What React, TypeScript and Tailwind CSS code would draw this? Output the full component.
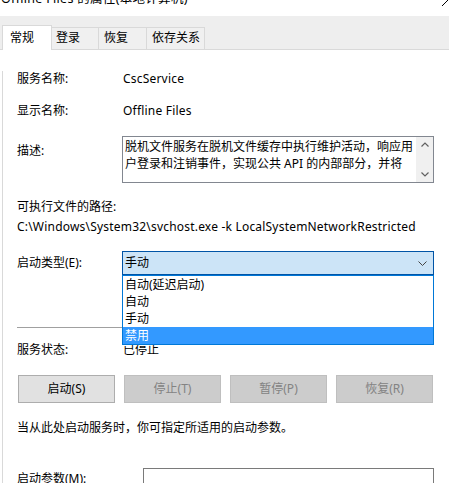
import React from "react";

const font = {
  fontFamily: '"Noto Sans", "Noto Sans CJK SC", sans-serif',
};

function Btn({ label, disabled }: { label: string; disabled?: boolean }) {
  return (
    <div
      className={
        "h-[28px] flex items-center justify-center border leading-[16px] " +
        (disabled
          ? "bg-[#cccccc] border-[#bfbfbf] text-[#838383]"
          : "bg-[#e1e1e1] border-[#adadad] text-black")
      }
    >
      {label}
    </div>
  );
}

export default function App() {
  return (
    <div
      className="w-[449px] h-[483px] overflow-hidden bg-white relative text-[12px] text-black"
      style={font}
    >
      {/* title bar */}
      <div className="h-[16px] relative overflow-hidden">
        <div className="absolute left-[1px] top-[-9px] leading-[16px] text-[12.5px] tracking-[0.3px]">
          Offline Files 的属性(本地计算机)
        </div>
        <svg className="absolute right-0 top-0" width="8" height="6" viewBox="0 0 8 6">
          <line x1="1" y1="6" x2="7" y2="0" stroke="#000" strokeWidth="1" />
        </svg>
      </div>

      {/* tab strip */}
      <div className="h-[34px] bg-[#eeeeee] border-b border-[#d9d9d9] flex items-end pl-[2px]">
        <div className="h-[25px] -mb-px w-[50px] bg-white border border-b-0 border-[#d9d9d9] pl-[7px] pt-[4px] leading-[16px] relative z-10">
          常规
        </div>
        <div className="h-[22px] w-[47px] border border-l-0 border-b-0 border-[#d9d9d9] bg-[#f0f0f0] pl-[4px] pt-[2px] leading-[16px]">
          登录
        </div>
        <div className="h-[22px] w-[48px] border border-l-0 border-b-0 border-[#d9d9d9] bg-[#f0f0f0] pl-[5px] pt-[2px] leading-[16px]">
          恢复
        </div>
        <div className="h-[22px] w-[58px] border border-l-0 border-b-0 border-[#d9d9d9] bg-[#f0f0f0] pl-[5px] pt-[2px] leading-[16px]">
          依存关系
        </div>
      </div>

      {/* panel */}
      <div className="ml-[2px] border-l border-[#d9d9d9] h-[440px] pl-[14px] pr-[15px] relative">
        <div className="flex leading-[16px] mt-[21px]">
          <div className="w-[106px]">服务名称:</div>
          <div className="tracking-[0.2px]">CscService</div>
        </div>
        <div className="flex leading-[16px] mt-[16px]">
          <div className="w-[106px]">显示名称:</div>
          <div className="tracking-[0.2px]">Offline Files</div>
        </div>
        <div className="flex mt-[17px]">
          <div className="w-[105px] leading-[16px] pt-[7px]">描述:</div>
          <div className="w-[312px] h-[47px] border border-[#828790] flex">
            <div className="flex-1 pl-[2px] pt-[1px] leading-[17px] whitespace-nowrap overflow-hidden">
              <div>脱机文件服务在脱机文件缓存中执行维护活动，响应用</div>
              <div>户登录和注销事件，实现公共 API 的内部部分，并将</div>
            </div>
            <div className="w-[17px] bg-[#f0f0f0] flex flex-col items-center justify-between py-[5px]">
              <svg width="8" height="5" viewBox="0 0 8 5">
                <path d="M0.5 4.5 L4 1 L7.5 4.5" fill="none" stroke="#606060" strokeWidth="1.2" />
              </svg>
              <svg width="8" height="5" viewBox="0 0 8 5">
                <path d="M0.5 0.5 L4 4 L7.5 0.5" fill="none" stroke="#606060" strokeWidth="1.2" />
              </svg>
            </div>
          </div>
        </div>
        <div className="leading-[16px] mt-[16px]">可执行文件的路径:</div>
        <div className="leading-[16px] mt-[4px] whitespace-nowrap tracking-[0.2px]">
          C:\Windows\System32\svchost.exe -k LocalSystemNetworkRestricted
        </div>
        <div className="flex mt-[16px] relative">
          <div className="w-[105px] leading-[16px] pt-[4px]">启动类型(E):</div>
          <div className="w-[312px] h-[24px] border border-[#0054a6] bg-[#cce4f7] flex items-center pl-[2px] pr-[6px] justify-between">
            <span className="leading-[16px]">手动</span>
            <svg width="9" height="5" viewBox="0 0 9 5">
              <path d="M0.5 0.5 L4.5 4.5 L8.5 0.5" fill="none" stroke="#444" strokeWidth="1" />
            </svg>
          </div>
          {/* dropdown list */}
          <div className="absolute left-[105px] top-[24px] w-[312px] bg-white border border-[#0078d7] z-20 flex flex-col leading-[16px]">
            <div className="h-[16px] pl-[2px] mt-[1px]">自动(延迟启动)</div>
            <div className="h-[17px] pl-[2px] pt-[1px]">自动</div>
            <div className="h-[17px] pl-[2px] pt-[1px]">手动</div>
            <div className="h-[17px] pl-[2px] pt-[1px] bg-[#3399ff] text-white">禁用</div>
          </div>
        </div>
        <div className="mt-[52px] h-px bg-[#a0a0a0] w-[416px]" />
        <div className="flex leading-[16px] mt-[14px]">
          <div className="w-[106px]">服务状态:</div>
          <div>已停止</div>
        </div>
        <div className="grid grid-cols-4 gap-[9px] mt-[17px] w-[416px] pl-[1px]">
          <Btn label="启动(S)" />
          <Btn label="停止(T)" disabled />
          <Btn label="暂停(P)" disabled />
          <Btn label="恢复(R)" disabled />
        </div>
        <div className="leading-[16px] mt-[17px]">当从此处启动服务时，你可指定所适用的启动参数。</div>
        <div className="flex mt-[32px]">
          <div className="w-[126px] leading-[16px] pt-[3px]">启动参数(M):</div>
          <div className="w-[291px] h-[23px] border border-[#7a7a7a]" />
        </div>
      </div>
    </div>
  );
}
